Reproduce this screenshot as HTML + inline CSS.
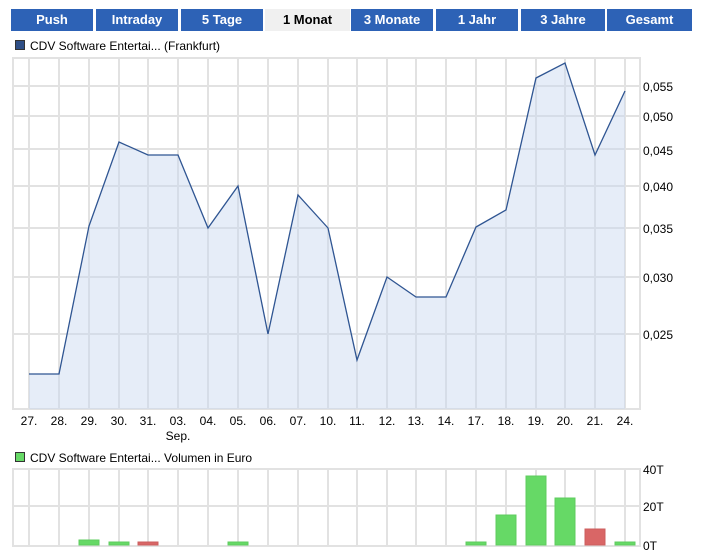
<!DOCTYPE html>
<html><head><meta charset="utf-8"><style>
body{margin:0;width:702px;height:556px;background:#fff;font-family:"Liberation Sans",sans-serif;position:relative;overflow:hidden}
.t{position:absolute;top:9px;height:22px;line-height:22px;text-align:center;font-weight:bold;font-size:13px;color:#fff;background:#2d62b6}
.t.a{background:#f0f0f0;color:#000}
.l{position:absolute;font-size:12px;color:#000;white-space:nowrap}
.sq{display:inline-block;width:8px;height:8px;border:1px solid #333;margin-right:5px;vertical-align:0}
</style></head><body>
<div class="t" style="left:11px;width:82px">Push</div>
<div class="t" style="left:96px;width:82px">Intraday</div>
<div class="t" style="left:181px;width:82px">5 Tage</div>
<div class="t a" style="left:265px;width:85px">1 Monat</div>
<div class="t" style="left:351px;width:82px">3 Monate</div>
<div class="t" style="left:436px;width:82px">1 Jahr</div>
<div class="t" style="left:521px;width:84px">3 Jahre</div>
<div class="t" style="left:607px;width:85px">Gesamt</div>
<div class="l" style="left:15px;top:39px"><span class="sq" style="background:#2f4f86"></span>CDV Software Entertai... (Frankfurt)</div>
<div class="l" style="left:15px;top:451px"><span class="sq" style="background:#66d966"></span>CDV Software Entertai... Volumen in Euro</div>
<svg width="702" height="556" style="position:absolute;left:0;top:0">
<g stroke="#e2e2e2" stroke-width="2" fill="none">
<rect x="13" y="58" width="627" height="351"/>
<path d="M13 86H640M13 116H640M13 149H640M13 186H640M13 228H640M13 277H640M13 334H640"/>
<path d="M29 58V409M59 58V409M89 58V409M119 58V409M148 58V409M178 58V409M208 58V409M238 58V409M268 58V409M298 58V409M328 58V409M357 58V409M387 58V409M416 58V409M446 58V409M476 58V409M506 58V409M536 58V409M565 58V409M595 58V409M625 58V409"/>
<rect x="13" y="469" width="627" height="77"/>
<path d="M13 506H640"/>
<path d="M29 469V546M59 469V546M89 469V546M119 469V546M148 469V546M178 469V546M208 469V546M238 469V546M268 469V546M298 469V546M328 469V546M357 469V546M387 469V546M416 469V546M446 469V546M476 469V546M506 469V546M536 469V546M565 469V546M595 469V546M625 469V546"/>
</g>
<path d="M29 374L59 374L89 226L119 142L148 155L178 155L208 228L238 186L268 334L298 195L328 228L357 360L387 277L416 297L446 297L476 227L506 210L536 78L565 63L595 155L625 91L625 409L29 409Z" fill="rgba(200,215,240,0.45)"/>
<path d="M29 374L59 374L89 226L119 142L148 155L178 155L208 228L238 186L268 334L298 195L328 228L357 360L387 277L416 297L446 297L476 227L506 210L536 78L565 63L595 155L625 91" fill="none" stroke="#2f5592" stroke-width="1.3"/>
<g fill="#66d966" stroke="#5fcc5f">
<rect x="79" y="540" width="20" height="5"/><rect x="109" y="542" width="20" height="3"/><rect x="228" y="542" width="20" height="3"/>
<rect x="466" y="542" width="20" height="3"/><rect x="496" y="515" width="20" height="30"/><rect x="526" y="476" width="20" height="69"/><rect x="555" y="498" width="20" height="47"/><rect x="615" y="542" width="20" height="3"/>
</g>
<g fill="#d96666" stroke="#cc5f5f"><rect x="138" y="542" width="20" height="3"/><rect x="585" y="529" width="20" height="16"/></g>
<g font-family="Liberation Sans,sans-serif" font-size="12" fill="#000">
<text x="643" y="91">0,055</text><text x="643" y="121">0,050</text><text x="643" y="155">0,045</text><text x="643" y="191">0,040</text><text x="643" y="233">0,035</text><text x="643" y="282">0,030</text><text x="643" y="339">0,025</text>
<text x="643" y="474">40T</text><text x="643" y="511">20T</text><text x="643" y="550">0T</text>
<g text-anchor="middle"><text x="29" y="425">27.</text><text x="59" y="425">28.</text><text x="89" y="425">29.</text><text x="119" y="425">30.</text><text x="148" y="425">31.</text><text x="178" y="425">03.</text><text x="208" y="425">04.</text><text x="238" y="425">05.</text><text x="268" y="425">06.</text><text x="298" y="425">07.</text><text x="328" y="425">10.</text><text x="357" y="425">11.</text><text x="387" y="425">12.</text><text x="416" y="425">13.</text><text x="446" y="425">14.</text><text x="476" y="425">17.</text><text x="506" y="425">18.</text><text x="536" y="425">19.</text><text x="565" y="425">20.</text><text x="595" y="425">21.</text><text x="625" y="425">24.</text>
<text x="178" y="440">Sep.</text></g>
</g>
</svg>
</body></html>
